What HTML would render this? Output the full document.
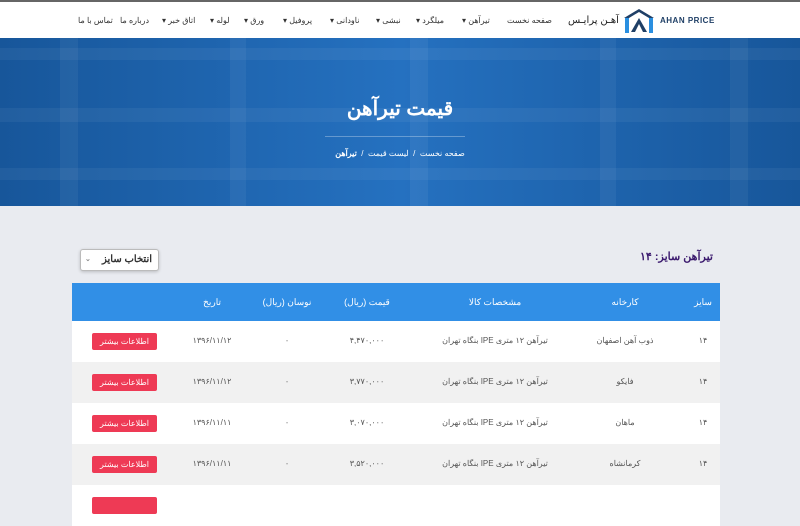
<!DOCTYPE html>
<html dir="rtl"><head><meta charset="utf-8"><style>
*{margin:0;padding:0;box-sizing:border-box}
body{width:800px;height:500px;overflow:hidden;background:#e9ebf0;font-family:"Liberation Sans","Noto Sans CJK SC",sans-serif;position:relative}
.a{position:absolute;white-space:nowrap}
.hdr{position:absolute;left:0;top:0;width:800px;height:38px;background:#fff;border-top:2px solid #666}
.nav{font-size:8px;color:#333;top:14px}
.hero{position:absolute;left:0;top:38px;width:800px;height:168px;background:linear-gradient(90deg,#17569a,#2571c0 50%,#17569a);overflow:hidden}
.hero i{position:absolute;background:rgba(255,255,255,.05)}
.tbl{position:absolute;left:72px;top:283px;width:648px}
.th{height:38px;background:#318fe6;position:relative;color:#fff;font-size:9px}
.tr{height:41px;position:relative;font-size:8px;color:#555}
.c{position:absolute;transform:translateX(-50%);white-space:nowrap}
.th .c{top:14px}.tr .c{top:15px}
.btn{position:absolute;left:20px;top:12px;width:65px;height:17px;background:#ee3a55;color:#fff;font-size:8px;text-align:center;line-height:17px;border-radius:2px}
</style></head><body>
<div class="hdr">
<div class="a nav" style="left:78px">تماس با ما</div>
<div class="a nav" style="left:120px">درباره ما</div>
<div class="a nav" style="left:162px">اتاق خبر ▾</div>
<div class="a nav" style="left:210px">لوله ▾</div>
<div class="a nav" style="left:244px">ورق ▾</div>
<div class="a nav" style="left:283px">پروفیل ▾</div>
<div class="a nav" style="left:330px">ناودانی ▾</div>
<div class="a nav" style="left:376px">نبشی ▾</div>
<div class="a nav" style="left:416px">میلگرد ▾</div>
<div class="a nav" style="left:462px">تیرآهن ▾</div>
<div class="a nav" style="left:507px">صفحه نخست</div>
<div class="a" style="left:568px;top:13px;font-size:10px;color:#222">آهـن پرایـس</div>
<svg class="a" style="left:622px;top:6px" width="34" height="26" viewBox="0 0 34 26"><path d="M2 10 L17 1 L32 10 L27 10 L17 4 L7 10Z" fill="#1f3f66"/><rect x="3" y="10" width="4" height="15" fill="#2a8fe0"/><rect x="27" y="10" width="4" height="15" fill="#2a8fe0"/><path d="M9 24 L17 10 L25 24 L21 24 L17 16 L13 24Z" fill="#1f3f66"/></svg>
<div class="a" dir="ltr" style="left:660px;top:14px;font-size:8px;font-weight:bold;color:#1f3f66;letter-spacing:.5px">AHAN PRICE</div>
</div>
<div class="hero">
<i style="left:0;top:10px;width:800px;height:12px"></i><i style="left:0;top:70px;width:800px;height:14px"></i><i style="left:0;top:130px;width:800px;height:12px"></i>
<i style="left:60px;top:0;width:18px;height:168px"></i><i style="left:230px;top:0;width:16px;height:168px"></i><i style="left:410px;top:0;width:18px;height:168px"></i><i style="left:600px;top:0;width:16px;height:168px"></i><i style="left:730px;top:0;width:18px;height:168px"></i>
</div>
<div class="a" style="left:0;width:800px;text-align:center;top:96px;font-size:20px;font-weight:bold;color:#fff">قیمت تیرآهن</div>
<div class="a" style="left:325px;top:136px;width:140px;height:1px;background:rgba(255,255,255,.3)"></div>
<div class="a" style="left:0;width:800px;text-align:center;top:149px;font-size:8px;color:#fff">صفحه نخست &nbsp;/&nbsp; لیست قیمت &nbsp;/&nbsp; <b>تیرآهن</b></div>
<div class="a" style="left:80px;top:249px;width:79px;height:22px;background:#fff;border:1px solid #bbb;border-radius:3px;box-shadow:0 1px 3px rgba(0,0,0,.2);font-size:10px;font-weight:bold;color:#333;padding:4px 6px;text-align:right">انتخاب سایز<span style="position:absolute;left:4px;top:5px;font-size:7px;color:#888">⌄</span></div>
<div class="a" style="left:640px;top:250px;font-size:11px;font-weight:bold;color:#3b1a6e">تیرآهن سایز: ۱۴</div>
<div class="tbl">
<div class="th"><span class="c" style="left:631px">سایز</span><span class="c" style="left:553px">کارخانه</span><span class="c" style="left:423px">مشخصات کالا</span><span class="c" style="left:295px">قیمت (ریال)</span><span class="c" style="left:215px">نوسان (ریال)</span><span class="c" style="left:140px">تاریخ</span></div>
<div class="tr" style="background:#fff"><span class="c" style="left:631px">۱۴</span><span class="c" style="left:553px">ذوب آهن اصفهان</span><span class="c" style="left:423px">تیرآهن ۱۲ متری IPE بنگاه تهران</span><span class="c" style="left:295px">۴,۴۷۰,۰۰۰</span><span class="c" style="left:215px">۰</span><span class="c" style="left:140px">۱۳۹۶/۱۱/۱۲</span><div class="btn">اطلاعات بیشتر</div></div>
<div class="tr" style="background:#f1f1f1"><span class="c" style="left:631px">۱۴</span><span class="c" style="left:553px">فایکو</span><span class="c" style="left:423px">تیرآهن ۱۲ متری IPE بنگاه تهران</span><span class="c" style="left:295px">۳,۷۷۰,۰۰۰</span><span class="c" style="left:215px">۰</span><span class="c" style="left:140px">۱۳۹۶/۱۱/۱۲</span><div class="btn">اطلاعات بیشتر</div></div>
<div class="tr" style="background:#fff"><span class="c" style="left:631px">۱۴</span><span class="c" style="left:553px">ماهان</span><span class="c" style="left:423px">تیرآهن ۱۲ متری IPE بنگاه تهران</span><span class="c" style="left:295px">۳,۰۷۰,۰۰۰</span><span class="c" style="left:215px">۰</span><span class="c" style="left:140px">۱۳۹۶/۱۱/۱۱</span><div class="btn">اطلاعات بیشتر</div></div>
<div class="tr" style="background:#f1f1f1"><span class="c" style="left:631px">۱۴</span><span class="c" style="left:553px">کرمانشاه</span><span class="c" style="left:423px">تیرآهن ۱۲ متری IPE بنگاه تهران</span><span class="c" style="left:295px">۳,۵۲۰,۰۰۰</span><span class="c" style="left:215px">۰</span><span class="c" style="left:140px">۱۳۹۶/۱۱/۱۱</span><div class="btn">اطلاعات بیشتر</div></div>
<div class="tr" style="background:#fff"><div class="btn"></div></div>
</div>
</body></html>
